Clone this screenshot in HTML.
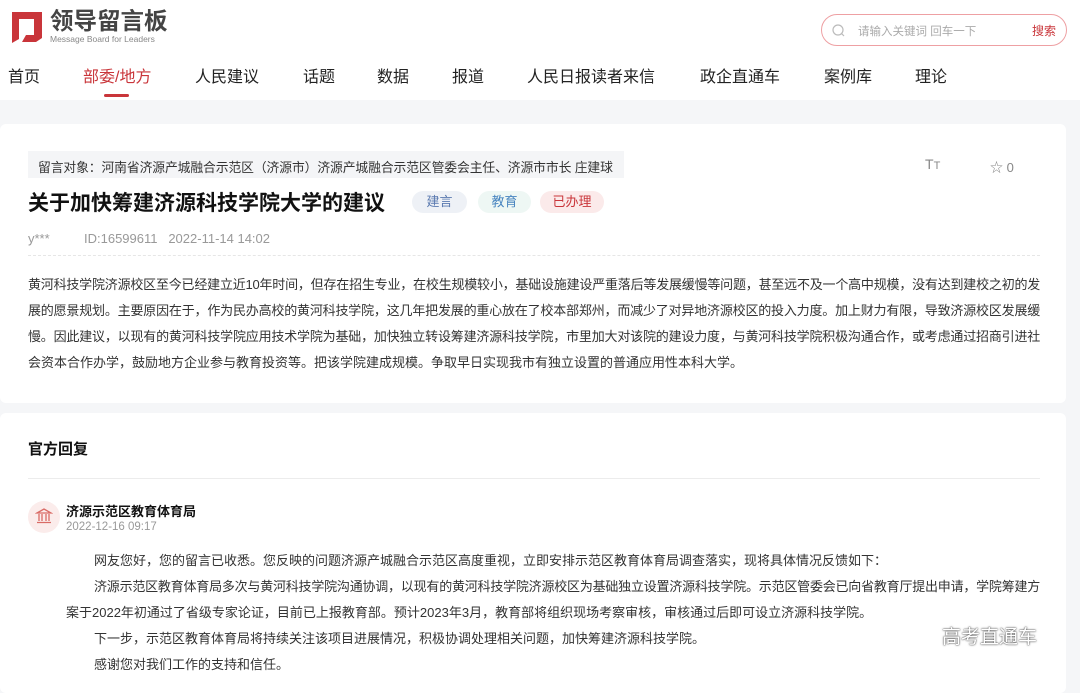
<!DOCTYPE html>
<html><head><meta charset="utf-8"><style>
*{margin:0;padding:0;box-sizing:border-box}
body{width:1080px;height:674px;overflow:hidden;background:#f5f6f8;font-family:"Liberation Sans","Noto Sans CJK SC",sans-serif;color:#333;position:relative}
.hdr{position:absolute;left:0;top:0;width:1080px;height:100px;background:#fff}
.abs{position:absolute;white-space:nowrap}
.nav{font-size:16px;color:#222;top:63px}
.card{position:absolute;left:0;width:1066px;background:#fff;border-radius:6px}
.p{font-size:13px;line-height:26px;color:#333}
.p .j{white-space:nowrap;text-align:justify;text-align-last:justify;letter-spacing:-0.3px}
.tag{position:absolute;top:191px;height:22px;border-radius:11px;font-size:13px;line-height:22px;text-align:center}
</style></head><body>
<div class="hdr"></div>
<svg class="abs" style="left:8px;top:8px" width="36" height="36" viewBox="0 0 36 36"><path d="M4 4h30v26l-6 4H14l4-7h8V11H11v20l-7 4V8z" fill="#c9353a"/></svg>
<div class="abs" style="left:50px;top:2px;font-size:23.5px;font-weight:bold;color:#444">领导留言板</div>
<div class="abs" style="left:50px;top:34px;font-size:8.5px;color:#888">Message Board for Leaders</div>
<div class="abs" style="left:821px;top:14px;width:246px;height:32px;border:1px solid #eea0a3;border-radius:16px"></div>
<svg class="abs" style="left:832px;top:24px" width="13" height="13" viewBox="0 0 13 13"><circle cx="6" cy="6" r="5" fill="none" stroke="#bbb" stroke-width="1.2"/><path d="M9.5 9.5l2.5 2.5" stroke="#bbb" stroke-width="1.2"/></svg>
<div class="abs" style="left:858px;top:23px;font-size:11.5px;color:#aaa">请输入关键词 回车一下</div>
<div class="abs" style="left:1032px;top:22px;font-size:12px;color:#c9353a">搜索</div>
<div class="abs nav" style="left:8px">首页</div>
<div class="abs nav" style="left:83px;color:#c9353a">部委/地方</div>
<div class="abs" style="left:104px;top:94px;width:25px;height:3px;background:#c9353a;border-radius:2px"></div>
<div class="abs nav" style="left:195px">人民建议</div>
<div class="abs nav" style="left:303px">话题</div>
<div class="abs nav" style="left:377px">数据</div>
<div class="abs nav" style="left:452px">报道</div>
<div class="abs nav" style="left:527px">人民日报读者来信</div>
<div class="abs nav" style="left:700px">政企直通车</div>
<div class="abs nav" style="left:824px">案例库</div>
<div class="abs nav" style="left:915px">理论</div>

<div class="card" style="top:124px;height:279px"></div>
<div class="abs" style="left:28px;top:151px;width:596px;height:27px;background:#f4f5f7"></div>
<div class="abs" style="left:38px;top:157px;font-size:12.8px;letter-spacing:-0.1px;color:#333">留言对象：河南省济源产城融合示范区（济源市）济源产城融合示范区管委会主任、济源市市长 庄建球</div>
<div class="abs" style="left:925px;top:156px;font-size:14px;color:#888">T<span style="font-size:11px">T</span></div>
<div class="abs" style="left:990px;top:157px;font-size:13px;color:#888">☆ 0</div>
<div class="abs" style="left:28px;top:187px;font-size:21px;font-weight:bold;color:#111">关于加快筹建济源科技学院大学的建议</div>
<div class="tag" style="left:412px;width:55px;background:#eef1f6;color:#5b7ab0">建言</div>
<div class="tag" style="left:478px;width:53px;background:#eef7f4;color:#4a86c0">教育</div>
<div class="tag" style="left:540px;width:64px;background:#fbeaea;color:#c9353a">已办理</div>
<div class="abs" style="left:28px;top:231px;font-size:13px;color:#999">y***</div>
<div class="abs" style="left:84px;top:231px;font-size:13px;color:#999">ID:16599611&nbsp;&nbsp;&nbsp;2022-11-14 14:02</div>
<div class="abs" style="left:28px;top:255px;width:1012px;border-top:1px dashed #e6e6e6"></div>
<div class="abs p" style="left:28px;top:272px;width:1012px;white-space:normal">
<div class="j">黄河科技学院济源校区至今已经建立近10年时间，但存在招生专业，在校生规模较小，基础设施建设严重落后等发展缓慢等问题，甚至远不及一个高中规模，没有达到建校之初的发</div>
<div class="j">展的愿景规划。主要原因在于，作为民办高校的黄河科技学院，这几年把发展的重心放在了校本部郑州，而减少了对异地济源校区的投入力度。加上财力有限，导致济源校区发展缓</div>
<div class="j">慢。因此建议，以现有的黄河科技学院应用技术学院为基础，加快独立转设筹建济源科技学院，市里加大对该院的建设力度，与黄河科技学院积极沟通合作，或考虑通过招商引进社</div>
<div>会资本合作办学，鼓励地方企业参与教育投资等。把该学院建成规模。争取早日实现我市有独立设置的普通应用性本科大学。</div>
</div>

<div class="card" style="top:413px;height:280px"></div>
<div class="abs" style="left:28px;top:438px;font-size:15px;font-weight:bold;color:#111">官方回复</div>
<div class="abs" style="left:28px;top:478px;width:1012px;height:1px;background:#ececec"></div>
<div class="abs" style="left:28px;top:501px;width:32px;height:32px;border-radius:50%;background:#fbeceb"></div>
<svg class="abs" style="left:35px;top:507px" width="18" height="18" viewBox="0 0 18 18" fill="none" stroke="#d96b66" stroke-width="1.3"><path d="M2 6L9 2l7 4zM4 7v7M7 7v7M11 7v7M14 7v7M2 15.5h14"/></svg>
<div class="abs" style="left:66px;top:501px;font-size:13px;font-weight:bold;color:#111">济源示范区教育体育局</div>
<div class="abs" style="left:66px;top:521px;font-size:11.5px;color:#999">2022-12-16 09:17</div>
<div class="abs p" style="left:66px;top:548px;width:974px;white-space:normal">
<div style="text-indent:28px">网友您好，您的留言已收悉。您反映的问题济源产城融合示范区高度重视，立即安排示范区教育体育局调查落实，现将具体情况反馈如下：</div>
<div class="j" style="padding-left:28px">济源示范区教育体育局多次与黄河科技学院沟通协调，以现有的黄河科技学院济源校区为基础独立设置济源科技学院。示范区管委会已向省教育厅提出申请，学院筹建方</div>
<div>案于2022年初通过了省级专家论证，目前已上报教育部。预计2023年3月，教育部将组织现场考察审核，审核通过后即可设立济源科技学院。</div>
<div style="text-indent:28px">下一步，示范区教育体育局将持续关注该项目进展情况，积极协调处理相关问题，加快筹建济源科技学院。</div>
<div style="text-indent:28px">感谢您对我们工作的支持和信任。</div>
</div>
<div class="abs" style="left:942px;top:622px;font-size:19px;color:#fff;text-shadow:0 0 2px #555,0 0 1px #333">高考直通车</div>
</body></html>
